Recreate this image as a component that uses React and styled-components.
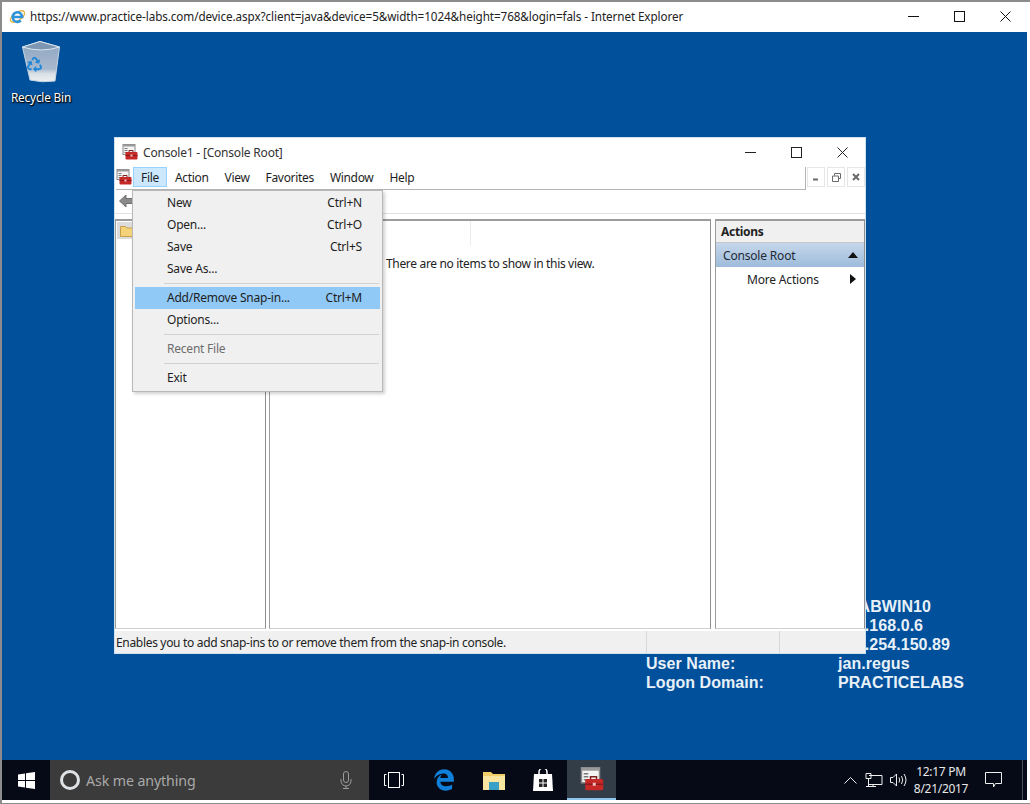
import React from 'react';
import styled, { createGlobalStyle } from 'styled-components';
import { FaRecycle } from 'react-icons/fa';
import { FaEdgeLegacy } from 'react-icons/fa6';

const GlobalStyle = createGlobalStyle`
  html, body { margin: 0; padding: 0; background: #fff; overflow: hidden; }
  * { box-sizing: border-box; }
  body {
    font-family: "Noto Sans", "Open Sans", sans-serif;
    font-size: 12px;
    letter-spacing: -0.18px;
    color: #1a1a1a;
  }
`;

const menuItems = [
  { label: 'New', keys: 'Ctrl+N' },
  { label: 'Open...', keys: 'Ctrl+O' },
  { label: 'Save', keys: 'Ctrl+S' },
  { label: 'Save As...' },
  { sep: true },
  { label: 'Add/Remove Snap-in...', keys: 'Ctrl+M', active: true },
  { label: 'Options...' },
  { sep: true },
  { label: 'Recent File', disabled: true },
  { sep: true },
  { label: 'Exit' },
];

const menus = ['Action', 'View', 'Favorites', 'Window', 'Help'];

const infoRows = [
  ['Host Name:', 'PLABWIN10'],
  ['Network Card:', '192.168.0.6'],
  ['IP Address:', '169.254.150.89'],
  ['User Name:', 'jan.regus'],
  ['Logon Domain:', 'PRACTICELABS'],
];

const Screen = styled.div`
  width: 1030px;
  height: 804px;
  display: flex;
  flex-direction: column;
  background: #fff;
  border-top: 2px solid #8c8c8c;
  border-left: 2px solid #8c8c8c;
  border-bottom: 1px solid #8c8c8c;
  overflow: hidden;
`;
const BrowserBar = styled.header`
  height: 30px;
  flex: none;
  display: flex;
  align-items: center;
  padding: 0 2px 2px 7px;
  font-size: 11.7px;
  letter-spacing: -0.09px;
  color: #222;
`;
const BrowserIcon = styled.span`
  width: 17px;
  height: 17px;
  margin-right: 4px;
  display: flex;
`;
const BrowserTitle = styled.span`
  flex: 1;
  white-space: nowrap;
`;
const WinButtons = styled.div`
  display: flex;
  align-items: center;
`;
const WinButton = styled.span`
  width: 46px;
  height: 24px;
  display: flex;
  align-items: center;
  justify-content: center;
  svg { display: block; }
`;
const Desktop = styled.main`
  flex: 1;
  position: relative;
  margin-right: 3px;
  background: #00509b;
  overflow: hidden;
`;
const DesktopIcon = styled.div`
  position: absolute;
  left: 3px;
  top: 9px;
  width: 72px;
  display: flex;
  flex-direction: column;
  align-items: center;
  gap: 6px;
  color: #fff;
  font-size: 11.8px;
  text-shadow: 0 1px 2px #000, 1px 1px 1px #000;
`;
const BinWrap = styled.span`
  position: relative;
  display: block;
  width: 38px;
  height: 42px;
  svg { display: block; }
`;
const BinSymbol = styled.span`
  position: absolute;
  left: 5px;
  top: 16px;
  color: #1f86d8;
`;
const InfoGrid = styled.div`
  position: absolute;
  left: 644px;
  top: 565px;
  display: grid;
  grid-template-columns: 192px auto;
  font-family: "Liberation Sans", Arial, sans-serif;
  font-weight: 700;
  font-size: 16px;
  letter-spacing: 0.05px;
  line-height: 19px;
  color: #e8f0f8;
`;
const ConsoleWindow = styled.section`
  position: absolute;
  left: 112px;
  top: 105px;
  width: 752px;
  height: 517px;
  background: #fff;
  border: 1px solid #cfe0f0;
  display: flex;
  flex-direction: column;
`;
const ConsoleTitle = styled.div`
  height: 29px;
  flex: none;
  display: flex;
  align-items: center;
  padding: 0 0 1px 7px;
  gap: 5px;
  font-size: 12px;
  letter-spacing: -0.2px;
  color: #333;
`;
const ConsoleName = styled.span`
  flex: 1;
`;
const MenuBar = styled.nav`
  height: 23px;
  flex: none;
  display: flex;
  align-items: flex-start;
  padding-left: 1px;
`;
const MenuStrip = styled.div`
  width: 693px;
  height: 23px;
  display: flex;
  align-items: flex-start;
  border-right: 1px solid #b4b4b4;
  border-bottom: 1px solid #b4b4b4;
`;
const AppIcon = styled.span`
  width: 17px;
  height: 20px;
  display: flex;
  align-items: center;
`;
const MenuLabel = styled.span`
  height: 20px;
  display: flex;
  align-items: center;
  padding: 1px 7px 0;
  letter-spacing: -0.32px;
  border: 1px solid ${({ $open }) => ($open ? '#99d1ff' : 'transparent')};
  background: ${({ $open }) => ($open ? '#cce8ff' : 'transparent')};
  color: #1e1e1e;
`;
const MdiButtons = styled.div`
  display: flex;
  gap: 2px;
  padding-left: 1px;
`;
const MdiButton = styled.span`
  width: 18px;
  height: 20px;
  display: flex;
  align-items: center;
  justify-content: center;
  border: 1px solid #e6e6e6;
  color: #6a6a6a;
`;
const ToolBar = styled.div`
  height: 24px;
  flex: none;
  display: flex;
  align-items: center;
  padding: 0 0 2px 4px;
  border-bottom: 1px solid #e2e2e2;
`;
const Panes = styled.div`
  flex: 1;
  min-height: 0;
  display: grid;
  grid-template-columns: 152px 442px 1fr;
  column-gap: 2px;
  padding: 5px 0 1px 0;
`;
const Pane = styled.div`
  position: relative;
  margin: 0 ${({ $trim }) => $trim || 0}px 0 ${({ $offset }) => $offset || 0}px;
  background: #fff;
  border-top: 2px solid #9c9c9c;
  border-left: 1px solid #9c9c9c;
  border-right: 1px solid #8f8f8f;
  border-bottom: 1px solid #d0d0d0;
  min-height: 0;
`;
const TreeRow = styled.div`
  margin: 1px;
  width: 40px;
  height: 17px;
  padding: 2px 0 0 3px;
  background: #dcdcdc;
`;
const ListHeader = styled.div`
  height: 25px;
  margin-left: 200px;
  border-left: 1px solid #ececec;
`;
const EmptyNote = styled.div`
  padding: 9px 0 0 116px;
  letter-spacing: -0.33px;
  color: #222;
`;
const ActionsTitle = styled.div`
  height: 22px;
  display: flex;
  align-items: center;
  padding-left: 5px;
  background: #f0f0f0;
  border-bottom: 1px solid #c8c8c8;
  font-weight: 700;
  letter-spacing: -0.3px;
  color: #222;
`;
const ActionsGroup = styled.div`
  height: 24px;
  display: flex;
  align-items: center;
  justify-content: space-between;
  padding: 0 6px 0 7px;
  background: linear-gradient(#c6d7ea, #9dbbdb);
  color: #1e2a36;
`;
const ActionRow = styled.div`
  height: 24px;
  display: flex;
  align-items: center;
  justify-content: space-between;
  padding: 0 8px 0 31px;
  color: #222;
`;
const StatusBar = styled.footer`
  height: 23px;
  flex: none;
  display: grid;
  grid-template-columns: 531px 133px 1fr;
  background: #f0f0f0;
  border-top: 1px solid #fff;
`;
const StatusCell = styled.div`
  display: flex;
  align-items: center;
  padding-left: 1px;
  letter-spacing: -0.32px;
  color: #222;
  & + & { border-left: 1px solid #d8d8d8; }
`;
const FileMenu = styled.div`
  position: absolute;
  left: 17px;
  top: 52px;
  width: 251px;
  height: 202px;
  padding: 1px 2px;
  display: flex;
  flex-direction: column;
  background: #f0f0f0;
  border: 1px solid #b8b8b8;
  box-shadow: 2px 2px 3px rgba(0, 0, 0, 0.18);
`;
const MenuItem = styled.div`
  height: 22px;
  flex: none;
  display: flex;
  align-items: center;
  justify-content: space-between;
  padding: 0 18px 1px 32px;
  letter-spacing: -0.22px;
  background: ${({ $active }) => ($active ? '#90c8f6' : 'transparent')};
  color: ${({ $disabled }) => ($disabled ? '#6d6d6d' : '#1e1e1e')};
`;
const MenuSep = styled.div`
  height: 1px;
  flex: none;
  margin: 3px 1px 3px 29px;
  background: #d2d2d2;
`;
const Taskbar = styled.footer`
  height: 40px;
  margin: 0 3px 3px 0;
  flex: none;
  display: flex;
  align-items: stretch;
  background: #050a16;
  color: #fff;
`;
const StartButton = styled.div`
  width: 48px;
  display: flex;
  align-items: center;
  justify-content: center;
`;
const SearchBox = styled.div`
  width: 319px;
  display: flex;
  align-items: center;
  padding: 0 17px 0 10px;
  background: #3b3b3b;
  color: #a9a9a9;
  font-size: 14.2px;
  letter-spacing: -0.1px;
  gap: 6px;
`;
const Ring = styled.span`
  width: 20px;
  height: 20px;
  flex: none;
  border-radius: 50%;
  border: 3px solid #dfe3e6;
`;
const SearchText = styled.span`
  flex: 1;
`;
const TaskSlot = styled.div`
  width: ${({ $w }) => $w || 49}px;
  display: flex;
  align-items: center;
  justify-content: center;
  background: ${({ $active }) => ($active ? '#333d47' : 'transparent')};
  border-bottom: ${({ $active }) => ($active ? '2px solid #8cc4ea' : 'none')};
`;
const Tray = styled.div`
  margin-left: auto;
  display: flex;
  align-items: center;
  color: #e8e8e8;
`;
const TrayIcon = styled.span`
  width: ${({ $w }) => $w || 24}px;
  display: flex;
  justify-content: center;
`;
const Clock = styled.div`
  width: 62px;
  margin-right: 4px;
  text-align: center;
  font-size: 12px;
  letter-spacing: -0.3px;
  line-height: 17px;
  white-space: nowrap;
`;
const ShowDesktop = styled.span`
  width: 5px;
  height: 100%;
  margin-left: 12px;
  border-left: 1px solid #4a4f57;
`;

const IeIcon = () => (
  <svg width="17" height="17" viewBox="0 0 17 17" fill="none">
    <ellipse cx="8.500" cy="8.500" rx="8.200" ry="4" transform="rotate(-35 8.500 8.500)" stroke="#e9b53c" strokeWidth="1.300" />
    <path d="M3.800 9h9.400a4.800 4.800 0 1 0-1.400 3.500" stroke="#2f93dc" strokeWidth="2.600" />
  </svg>
);

const ConsoleIcon = ({ size = 16 }) => (
  <svg width={size} height={size} viewBox="0 0 16 16">
    <rect x="1" y="0.500" width="12" height="10" fill="#f4f4f4" stroke="#8a8a8a" />
    <rect x="1" y="0.500" width="12" height="2" fill="#9a9a9a" />
    <path d="M2.500 4.500h3M2.500 6.500h3M2.500 8.500h3" stroke="#7a7a7a" />
    <path d="M7 8V6.500h4V8" fill="none" stroke="#7e1f1f" />
    <rect x="3.500" y="8" width="12" height="7.500" rx="1" fill="#c62828" />
    <rect x="3.500" y="11" width="12" height="1" fill="#8c1a1a" />
    <rect x="8.500" y="10.500" width="2" height="2" fill="#f0c0c0" />
  </svg>
);

const WindowsLogo = () => (
  <svg width="17" height="17" viewBox="0 0 17 17" fill="#fff">
    <path d="M0 2.400 7 1.400V8H0zM8 1.200 17 0V8H8zM0 9h7v6.600l-7-1zM8 9h9v8l-9-1.200z" />
  </svg>
);

const RecycleBin = () => (
  <svg width="38" height="42" viewBox="0 0 38 42">
    <defs>
      <linearGradient id="binBody" x1="0" y1="0" x2="0" y2="1">
        <stop offset="0" stopColor="#8ea6c2" />
        <stop offset="0.68" stopColor="#a7b9cd" />
        <stop offset="0.8" stopColor="#d9e0e6" />
        <stop offset="1" stopColor="#eef1f3" />
      </linearGradient>
    </defs>
    <path d="M0.500 6 18 0.500 37.500 6 33 40q-13 2-25-1z" fill="url(#binBody)" stroke="#c6d3e2" />
    <path d="M0.500 6 18 0.500 37.500 6q-18 6-37 0z" fill="#7d96b2" stroke="#dbe6f0" />
  </svg>
);

const App = () => {
  return (
    <>
      <GlobalStyle />
      <Screen>
        <BrowserBar>
          <BrowserIcon>
            <IeIcon />
          </BrowserIcon>
          <BrowserTitle>
            https://www.practice-labs.com/device.aspx?client=java&device=5&width=1024&height=768&login=fals - Internet Explorer
          </BrowserTitle>
          <WinButtons>
            <WinButton>
              <svg width="11" height="11"><path d="M0 5.500h11" stroke="#111" /></svg>
            </WinButton>
            <WinButton>
              <svg width="11" height="11"><rect x="0.500" y="0.500" width="10" height="10" fill="none" stroke="#111" /></svg>
            </WinButton>
            <WinButton>
              <svg width="11" height="11"><path d="M0.500 0.500l10 10M10.500 0.500l-10 10" stroke="#111" /></svg>
            </WinButton>
          </WinButtons>
        </BrowserBar>
        <Desktop>
          <DesktopIcon>
            <BinWrap>
              <RecycleBin />
              <BinSymbol>
                <FaRecycle size={15} />
              </BinSymbol>
            </BinWrap>
            <span>Recycle Bin</span>
          </DesktopIcon>
          <InfoGrid>
            {infoRows.map(([label, value]) => (
              <React.Fragment key={label}>
                <span>{label}</span>
                <span>{value}</span>
              </React.Fragment>
            ))}
          </InfoGrid>
          <ConsoleWindow>
            <ConsoleTitle>
              <ConsoleIcon />
              <ConsoleName>Console1 - [Console Root]</ConsoleName>
              <WinButtons>
                <WinButton>
                  <svg width="11" height="11"><path d="M0 5.500h11" stroke="#222" /></svg>
                </WinButton>
                <WinButton>
                  <svg width="11" height="11"><rect x="0.500" y="0.500" width="10" height="10" fill="none" stroke="#222" /></svg>
                </WinButton>
                <WinButton>
                  <svg width="11" height="11"><path d="M0.500 0.500l10 10M10.500 0.500l-10 10" stroke="#222" /></svg>
                </WinButton>
              </WinButtons>
            </ConsoleTitle>
            <MenuBar>
              <MenuStrip>
                <AppIcon><ConsoleIcon /></AppIcon>
                <MenuLabel $open>File</MenuLabel>
                {menus.map((m) => (
                  <MenuLabel key={m}>{m}</MenuLabel>
                ))}
              </MenuStrip>
              <MdiButtons>
                <MdiButton>
                  <svg width="8" height="8"><path d="M1 6.500h5" stroke="currentColor" strokeWidth="2" /></svg>
                </MdiButton>
                <MdiButton>
                  <svg width="9" height="9"><path d="M2.500 2.500v-2h6v5h-2M.5 3h6v5.500h-6z" fill="none" stroke="currentColor" /></svg>
                </MdiButton>
                <MdiButton>
                  <svg width="8" height="8"><path d="M1 1l6 6M7 1l-6 6" stroke="currentColor" strokeWidth="2" /></svg>
                </MdiButton>
              </MdiButtons>
            </MenuBar>
            <ToolBar>
              <svg width="14" height="14" viewBox="0 0 14 14">
                <path d="M7 1 0.500 7 7 13V9.500h7v-5H7z" fill="#8a8a8a" stroke="#6e6e6e" />
              </svg>
            </ToolBar>
            <Panes>
              <Pane $trim={1}>
                <TreeRow>
                  <svg width="16" height="13" viewBox="0 0 16 13">
                    <path d="M0.500 2.500h5l1.500 1.500h8v8.500h-14.500z" fill="#f3d27a" stroke="#c9a04a" />
                  </svg>
                </TreeRow>
              </Pane>
              <Pane>
                <ListHeader />
                <EmptyNote>There are no items to show in this view.</EmptyNote>
              </Pane>
              <Pane $offset={2}>
                <ActionsTitle>Actions</ActionsTitle>
                <ActionsGroup>
                  Console Root
                  <svg width="10" height="6"><path d="M5 0l5 6H0z" fill="#111" /></svg>
                </ActionsGroup>
                <ActionRow>
                  More Actions
                  <svg width="6" height="10"><path d="M0 0l6 5-6 5z" fill="#111" /></svg>
                </ActionRow>
              </Pane>
            </Panes>
            <StatusBar>
              <StatusCell>Enables you to add snap-ins to or remove them from the snap-in console.</StatusCell>
              <StatusCell />
              <StatusCell />
            </StatusBar>
            <FileMenu>
              {menuItems.map((item, i) =>
                item.sep ? (
                  <MenuSep key={i} />
                ) : (
                  <MenuItem key={item.label} $active={item.active} $disabled={item.disabled}>
                    <span>{item.label}</span>
                    <span>{item.keys}</span>
                  </MenuItem>
                )
              )}
            </FileMenu>
          </ConsoleWindow>
        </Desktop>
        <Taskbar>
          <StartButton><WindowsLogo /></StartButton>
          <SearchBox>
            <Ring />
            <SearchText>Ask me anything</SearchText>
            <svg width="12" height="18" viewBox="0 0 12 18" fill="none" stroke="#9a9a9a">
              <rect x="3.500" y="0.500" width="5" height="11" rx="2.500" />
              <path d="M1 8v2a5 5 0 0 0 10 0V8M6 15v2.500M3 17.500h6" />
            </svg>
          </SearchBox>
          <TaskSlot $w={50}>
            <svg width="20" height="16" viewBox="0 0 20 16" fill="none" stroke="#fff">
              <rect x="4.500" y="0.500" width="11" height="15" />
              <path d="M2.500 2.500h-2v11h2M17.500 2.500h2v11h-2" />
            </svg>
          </TaskSlot>
          <TaskSlot $w={50}>
            <FaEdgeLegacy size={22} color="#0f7fd8" />
          </TaskSlot>
          <TaskSlot>
            <svg width="22" height="20" viewBox="0 0 22 20">
              <path d="M0 2h8l2 2h12v16H0z" fill="#f3cf6a" />
              <path d="M0 6h22v14H0z" fill="#fbe6a0" />
              <path d="M6 12h10v8H6z" fill="#3aa0c8" />
            </svg>
          </TaskSlot>
          <TaskSlot>
            <svg width="20" height="22" viewBox="0 0 20 22">
              <path d="M6 6V3a4 4 0 0 1 8 0v3" fill="none" stroke="#fff" strokeWidth="1.500" />
              <path d="M1 5h18l1 17H0z" fill="#fff" />
              <path d="M6 10h3.500v3.500H6zM10.500 10H14v3.500h-3.500zM6 14.500h3.500V18H6zM10.500 14.500H14V18h-3.500z" fill="#222" />
            </svg>
          </TaskSlot>
          <TaskSlot $active $w={49}>
            <ConsoleIcon size={24} />
          </TaskSlot>
          <Tray>
            <TrayIcon>
              <svg width="13" height="8" fill="none" stroke="#eee"><path d="M0.500 7.500l6-6 6 6" /></svg>
            </TrayIcon>
            <TrayIcon>
              <svg width="18" height="15" viewBox="0 0 18 15" fill="none" stroke="#eee">
                <path d="M4 2.500h13v9H4M1 .5h5v5H1zM3.500 5.500v8M1 13.500h10M8 11.500v2" />
              </svg>
            </TrayIcon>
            <TrayIcon>
              <svg width="17" height="14" viewBox="0 0 17 14" fill="none" stroke="#eee">
                <path d="M.5 4.500h2.500l3.500-3.500v12l-3.500-3.500H.5zM9 4.500q1.500 2.500 0 5M11.500 3q2.500 4 0 8M14 1q4 6 0 12" />
              </svg>
            </TrayIcon>
            <Clock>
              <div>12:17 PM</div>
              <div>8/21/2017</div>
            </Clock>
            <TrayIcon $w={34}>
              <svg width="17" height="16" viewBox="0 0 17 16" fill="none" stroke="#eee">
                <path d="M.5.500h16v11h-6l-2 3.500v-3.500h-8z" />
              </svg>
            </TrayIcon>
            <ShowDesktop />
          </Tray>
        </Taskbar>
      </Screen>
    </>
  );
};

export default App;
